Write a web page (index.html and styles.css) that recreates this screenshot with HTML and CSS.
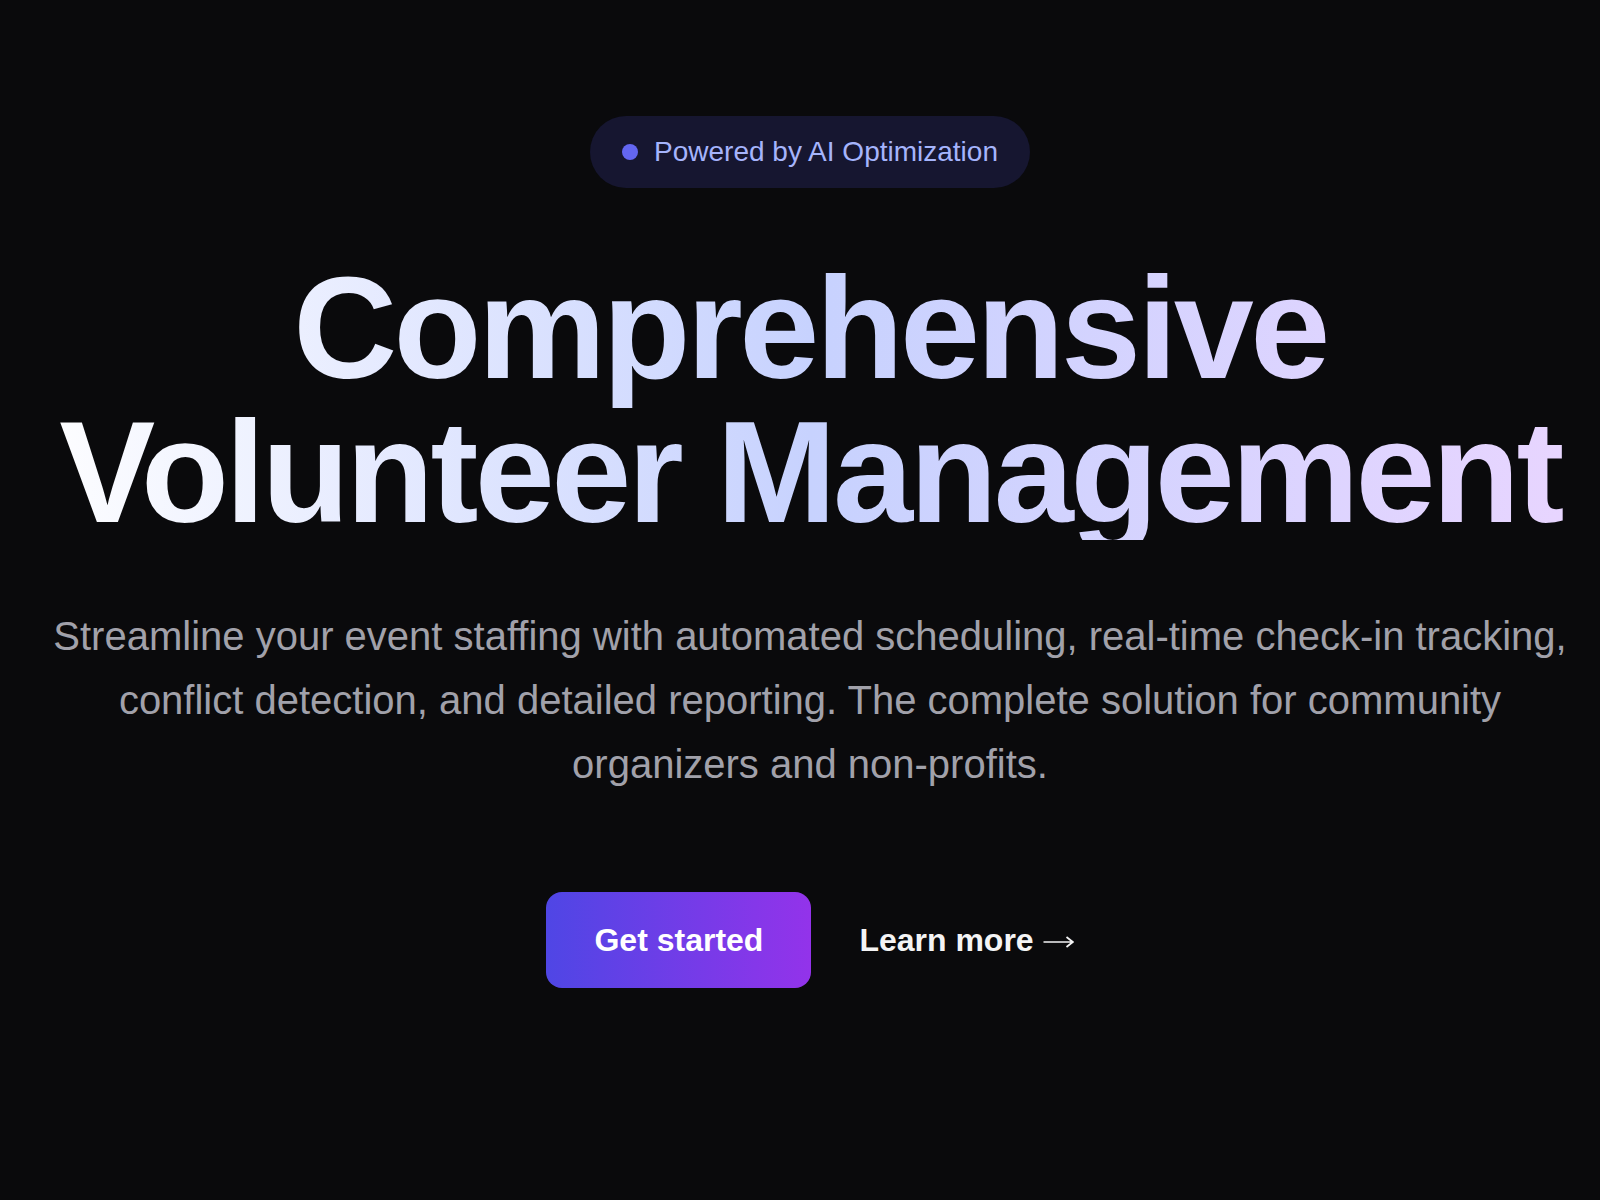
FILE: index.html
```html
<!DOCTYPE html>
<html lang="en">
<head>
<meta charset="utf-8">
<title>Volunteer Management</title>
<link rel="stylesheet" href="styles.css">
</head>
<body>
<main class="hero">
  <div class="badge"><span class="badge-dot"></span><span class="badge-text">Powered by AI Optimization</span></div>
  <h1 class="title">Comprehensive Volunteer Management</h1>
  <p class="lead">Streamline your event staffing with automated scheduling, real-time check-in tracking, conflict detection, and detailed reporting. The complete solution for community organizers and non-profits.</p>
  <div class="actions">
    <a class="btn-primary" href="#">Get started</a>
    <a class="link" href="#">Learn more <svg class="arrow" width="31" height="14" viewBox="0 0 31 14" aria-hidden="true"><path d="M0.5 7H29.5M23.5 2L29.8 7L23.5 12" fill="none" stroke="currentColor" stroke-width="1.7" stroke-linecap="butt" stroke-linejoin="miter"/></svg></a>
  </div>
</main>
</body>
</html>
```
FILE: styles.css
```css
html, body {
  margin: 0;
  background: #0a0a0c;
}
body {
  font-family: "Liberation Sans", Arial, sans-serif;
  min-height: 1200px;
}
.hero {
  display: flex;
  flex-direction: column;
  align-items: center;
  text-align: center;
  padding: 116px 0 0 20px;
}
.badge {
  display: inline-flex;
  align-items: center;
  gap: 16px;
  padding: 16px 32px;
  border-radius: 9999px;
  background: #161630;
  color: #a5b4fc;
  font-size: 28px;
  line-height: 40px;
}
.badge-dot {
  width: 16px;
  height: 16px;
  border-radius: 50%;
  background: #6366f1;
}
.title {
  align-self: stretch;
  margin: 64px 0 0;
  padding-top: 5px;
  font-size: 144px;
  line-height: 1;
  font-weight: 700;
  letter-spacing: -0.025em;
  background-image: linear-gradient(to right, #ffffff, #c7d2fe, #e9d5ff);
  background-repeat: no-repeat;
  background-size: 100% calc(100% - 5px);
  -webkit-background-clip: text;
  background-clip: text;
  color: transparent;
}
.lead {
  margin: 59px 0 0;
  max-width: 1536px;
  font-size: 40px;
  line-height: 64px;
  color: #a1a1aa;
}
.actions {
  margin-top: 96px;
  display: flex;
  align-items: center;
  gap: 48px;
}
.btn-primary {
  padding: 24px 48px;
  border-radius: 16px;
  background: linear-gradient(to right, #4f46e5, #9333ea);
  color: #ffffff;
  font-weight: 700;
  font-size: 32px;
  line-height: 48px;
  text-decoration: none;
}
.link {
  color: #f4f4f5;
  font-weight: 700;
  font-size: 32px;
  line-height: 48px;
  text-decoration: none;
}
.arrow {
  vertical-align: middle;
  position: relative;
  top: -1px;
}
```
